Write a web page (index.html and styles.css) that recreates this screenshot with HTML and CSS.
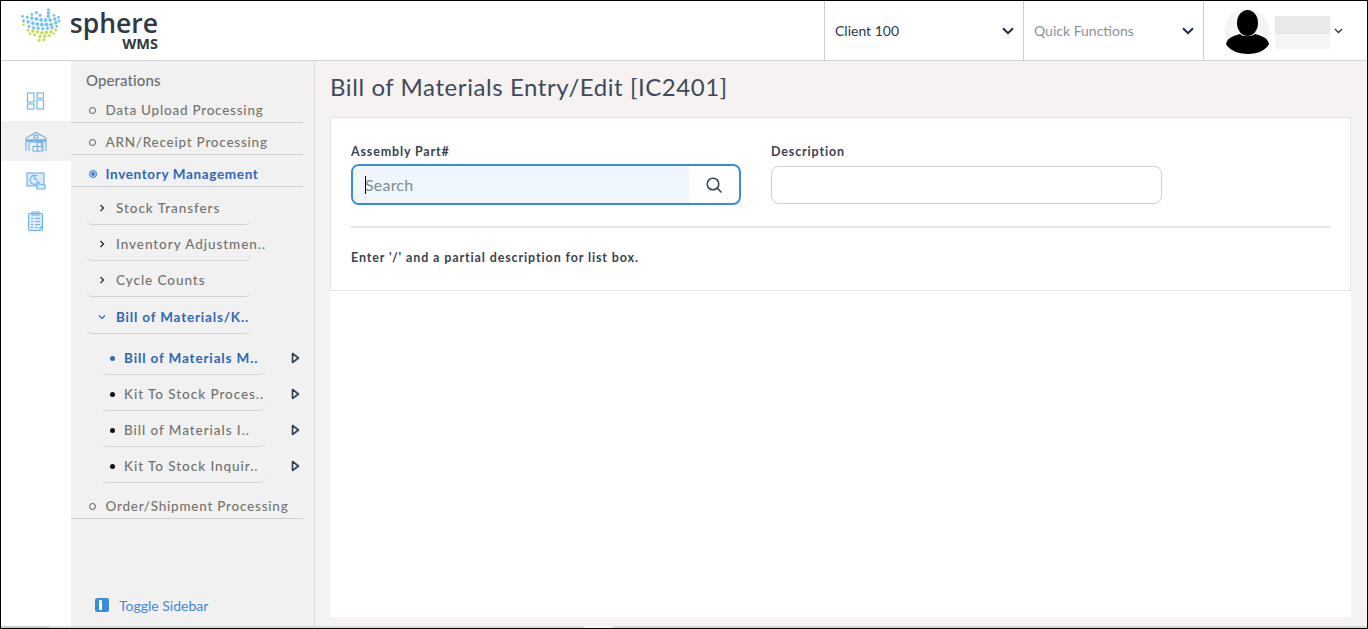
FILE: index.html
```html
<!DOCTYPE html>
<html lang="en">
<head>
<meta charset="utf-8">
<title>Bill of Materials Entry/Edit</title>
<link rel="stylesheet" href="styles.css">
</head>
<body>
<div class="frame">
  <header class="topbar">
    <div class="logo">
      <svg class="logo-mark" width="42" height="35" viewBox="0 0 44 38">
        <g fill="#6ec1e8" stroke="#6ec1e8" stroke-width=".7">
          <circle cx="30" cy="2" r="1.3"/><circle cx="30" cy="5.5" r="1.5"/><circle cx="30" cy="9" r="1.6"/><circle cx="17" cy="5" r="1.3"/><circle cx="21" cy="8" r="1.4"/><circle cx="12" cy="7" r="1.2"/><circle cx="36" cy="8" r="1.2"/>
          <circle cx="2" cy="9" r="1.2"/><circle cx="7" cy="10" r="1.3"/><circle cx="12" cy="11" r="1.5"/><circle cx="17" cy="12" r="1.7"/><circle cx="22" cy="13" r="1.7"/><circle cx="27" cy="13" r="1.7"/><circle cx="32" cy="13" r="1.7"/><circle cx="37" cy="12" r="1.5"/><circle cx="41" cy="10" r="1.2"/>
          <circle cx="3" cy="14" r="1.3"/><circle cx="8" cy="15" r="1.5"/><circle cx="13" cy="16.5" r="1.7"/><circle cx="18" cy="17.5" r="1.8"/><circle cx="23" cy="18" r="1.8"/><circle cx="28" cy="18" r="1.8"/><circle cx="33" cy="18" r="1.7"/><circle cx="38" cy="16" r="1.5"/><circle cx="41.500" cy="14" r="1.2"/>
          <circle cx="9" cy="20" r="1.3"/><circle cx="14" cy="21.500" r="1.4"/><circle cx="19" cy="22" r="1.4"/><circle cx="24" cy="22.500" r="1.4"/><circle cx="29" cy="22" r="1.4"/><circle cx="34" cy="21.500" r="1.4"/><circle cx="39" cy="20" r="1.2"/>
        </g>
        <g fill="#c5d94e" stroke="#c5d94e" stroke-width=".7">
          <circle cx="3" cy="18" r="1"/><circle cx="8" cy="24" r="1.300"/><circle cx="13" cy="25" r="1.500"/><circle cx="18" cy="26" r="1.500"/><circle cx="23" cy="27" r="1.600"/><circle cx="28" cy="26.500" r="1.600"/><circle cx="33" cy="26" r="1.500"/><circle cx="38" cy="24" r="1.300"/>
          <circle cx="10" cy="28" r="1.200"/><circle cx="15" cy="29" r="1.300"/><circle cx="21" cy="31" r="1.500"/><circle cx="26" cy="30.500" r="1.500"/><circle cx="31" cy="30" r="1.300"/><circle cx="36" cy="28" r="1.100"/>
          <circle cx="20" cy="35" r="1.300"/><circle cx="25" cy="34.500" r="1.300"/>
        </g>
      </svg>
      <div class="logo-text">
        <span class="logo-name">sphere</span>
        <span class="logo-sub">WMS</span>
      </div>
    </div>
    <div class="top-cell client">
      <span>Client 100</span>
      <svg class="chev" width="12" height="8" viewBox="0 0 12 8"><path d="M1 1.200l5 5 5-5"/></svg>
    </div>
    <div class="top-cell quick">
      <span>Quick Functions</span>
      <svg class="chev" width="12" height="8" viewBox="0 0 12 8"><path d="M1 1.200l5 5 5-5"/></svg>
    </div>
    <div class="user">
      <svg class="avatar" width="46" height="46" viewBox="0 0 46 46">
        <circle cx="23" cy="23" r="22.500" fill="#f4f4f4"/>
        <ellipse cx="23.500" cy="15" rx="10.500" ry="13" fill="#000"/>
        <path d="M2 36c1-6 7-8 14-10 2 3 12 3 15 0 7 2 13 4 14 10-3 6-11 10-21 10S5 42 2 36z" fill="#000"/>
      </svg>
      <div class="user-name"><div class="name-a"></div><div class="name-b"></div></div>
      <svg class="chev small" width="9" height="6" viewBox="0 0 9 6"><path d="M1 1l3.500 3.500L8 1"/></svg>
    </div>
  </header>

  <div class="body">
    <nav class="rail">
      <div class="rail-item">
        <svg width="20" height="18" viewBox="0 0 20 18"><rect x="1.500" y="1" width="6.500" height="9" /><rect x="11" y="1" width="6.500" height="5"/><rect x="1.500" y="12" width="6.500" height="5"/><rect x="11" y="8" width="6.500" height="9"/></svg>
      </div>
      <div class="rail-item active">
        <svg width="22" height="21" viewBox="0 0 22 21"><path d="M1 20V7l10-5.500L21 7v13"/><path d="M4 20V11h14v9"/><path d="M1 9.500h20" stroke-width="2.500"/><rect x="9" y="4.500" width="4" height="2.500"/><rect x="8" y="15.500" width="4.500" height="4.500"/><rect x="12.500" y="15.500" width="4.500" height="4.500"/><rect x="12" y="11.500" width="4.500" height="4"/></svg>
      </div>
      <div class="rail-item">
        <svg width="20" height="18" viewBox="0 0 20 18"><rect class="soft" x="1" y="1" width="17" height="13"/><path d="M11 4a4.500 4.500 0 1 0 1.500 6"/><path d="M8.500 7V3M8.500 7l3.500 1"/><path class="soft" d="M11 17V10.500c0-1 2-1 2 0v1.500l6 1v4z"/></svg>
      </div>
      <div class="rail-item">
        <svg width="18" height="21" viewBox="0 0 18 21"><rect class="soft" x="1.500" y="2.500" width="14" height="17" rx="1.500"/><rect x="5" y="1" width="7" height="3"/><path d="M4 7.500h2M8 7.500h5M4 10.500h2M8 10.500h5M4 13.500h2M8 13.500h5M4 16.500h2M8 16.500h3M12.500 18l3-3"/></svg>
      </div>
    </nav>

    <aside class="sidebar">
      <div class="side-title">Operations</div>
      <div class="menu-row"><i class="ring"></i>Data Upload Processing</div>
      <div class="menu-row"><i class="ring"></i>ARN/Receipt Processing</div>
      <div class="menu-row current"><i class="ring on"></i>Inventory Management</div>

      <div class="sub-row first"><svg class="caret" width="6" height="8" viewBox="0 0 6 8"><path d="M1.500 1l3 3-3 3"/></svg>Stock Transfers</div>
      <div class="sub-row"><svg class="caret" width="6" height="8" viewBox="0 0 6 8"><path d="M1.500 1l3 3-3 3"/></svg>Inventory Adjustmen..</div>
      <div class="sub-row"><svg class="caret" width="6" height="8" viewBox="0 0 6 8"><path d="M1.500 1l3 3-3 3"/></svg>Cycle Counts</div>
      <div class="sub-row current"><svg class="caret open" width="8" height="6" viewBox="0 0 8 6"><path d="M1 1.500l3 3 3-3"/></svg>Bill of Materials/K..</div>

      <div class="leaf-list">
        <div class="leaf current"><span class="leaf-label"><i class="dot"></i>Bill of Materials M..</span><svg class="play" width="9" height="12" viewBox="0 0 9 12"><path d="M1.500 1.500v9L7.500 6z"/></svg></div>
        <div class="leaf"><span class="leaf-label"><i class="dot"></i>Kit To Stock Proces..</span><svg class="play" width="9" height="12" viewBox="0 0 9 12"><path d="M1.500 1.500v9L7.500 6z"/></svg></div>
        <div class="leaf"><span class="leaf-label"><i class="dot"></i>Bill of Materials I..</span><svg class="play" width="9" height="12" viewBox="0 0 9 12"><path d="M1.500 1.500v9L7.500 6z"/></svg></div>
        <div class="leaf"><span class="leaf-label"><i class="dot"></i>Kit To Stock Inquir..</span><svg class="play" width="9" height="12" viewBox="0 0 9 12"><path d="M1.500 1.500v9L7.500 6z"/></svg></div>
      </div>

      <div class="menu-row"><i class="ring"></i>Order/Shipment Processing</div>

      <div class="toggle"><span class="toggle-icon"><i></i></span>Toggle Sidebar</div>
    </aside>

    <main class="main">
      <h1 class="page-title">Bill of Materials Entry/Edit [IC2401]</h1>
      <div class="sheet">
        <section class="card">
          <div class="fields">
            <div class="field">
              <label class="field-label" for="part">Assembly Part#</label>
              <div class="search">
                <i class="text-caret"></i>
                <input id="part" class="search-input" type="text" placeholder="Search">
                <svg class="search-icon" width="18" height="18" viewBox="0 0 18 18"><circle cx="8" cy="8" r="5.800"/><path d="M12.300 12.300l3.700 3.700"/></svg>
              </div>
            </div>
            <div class="field">
              <label class="field-label" for="desc">Description</label>
              <input id="desc" class="desc-input" type="text">
            </div>
          </div>
          <hr class="rule">
          <p class="hint">Enter '/' and a partial description for list box.</p>
        </section>
      </div>
    </main>
  </div>

  <div class="scrollbar">
    <div class="track-a"></div>
    <div class="track-b"></div>
    <div class="track-gap"></div>
    <div class="track-c"></div>
  </div>
</div>
</body>
</html>
```

FILE: styles.css
```css
* { box-sizing: border-box; }
html, body { margin: 0; padding: 0; height: 100%; overflow: hidden; }
body { font-family: Lato, "Open Sans", sans-serif; color: #333; background: #fff; }

.frame {
  width: 1368px;
  height: 629px;
  border: 1px solid #000;
  display: flex;
  flex-direction: column;
  overflow: hidden;
}

/* top bar */
.topbar {
  height: 60px;
  flex: none;
  display: flex;
  align-items: stretch;
  border-bottom: 1px solid #d3d3d3;
  background: #fff;
}
.logo { width: 823px; display: flex; align-items: flex-start; padding: 7px 0 0 19px; }
.logo-mark { margin-right: 8px; }
.logo-text { display: flex; flex-direction: column; align-items: flex-end; width: 88px; color: #2f3a46; padding-top: 2px; }
.logo-name { font-family: "Open Sans", sans-serif; font-size: 26.500px; line-height: 26px; font-weight: 600; }
.logo-sub { font-family: "Open Sans", sans-serif; font-size: 14.500px; line-height: 15px; font-weight: 700; }

.top-cell {
  display: flex;
  align-items: center;
  justify-content: space-between;
  border-left: 1px solid #cfcfcf;
  font-size: 14px;
  padding: 0 9px 0 10px;
}
.client { width: 199px; color: #2b3a4a; }
.quick { width: 180px; color: #8b8f94; }
.chev { fill: none; stroke: #1e2a44; stroke-width: 2; }
.chev.small { stroke-width: 1.300; stroke: #333; }
.user { flex: 1; border-left: 1px solid #cfcfcf; display: flex; align-items: center; padding: 0 0 0 20px; }
.avatar { margin-right: 5px; flex: none; }
.user-name { width: 55px; margin: 4px 4px 0 0; }
.name-a { height: 18px; background: #e8e9ea; }
.name-b { height: 15px; background: #f6f6f6; }

/* layout */
.body { flex: 1; display: flex; min-height: 0; }

.rail { width: 70px; flex: none; background: #fff; padding-top: 20px; }
.rail-item { height: 40px; display: flex; align-items: center; justify-content: center; }
.rail-item.active { background: #f1f1f1; }
.rail-item svg { fill: none; stroke: #6cb0ec; stroke-width: 1.100; }
.rail-item svg .soft { fill: #dcebfa; }

.sidebar {
  width: 244px;
  flex: none;
  background: #f1f1f1;
  border-right: 1px solid #dedcdc;
  display: flex;
  flex-direction: column;
  font-size: 13.500px;
  letter-spacing: .95px;
  font-weight: 500;
  color: #73726f;
}
.side-title { height: 30px; padding: 10px 0 0 15px; font-size: 15px; line-height: 18px; letter-spacing: .1px; color: #6b6d70; }
.menu-row {
  width: 232px;
  height: 32px;
  display: flex;
  align-items: center;
  padding-left: 18px;
  padding-top: 7px;
  border-bottom: 1px solid #cfcfcf;
  font-size: 13.500px;
  letter-spacing: .76px;
  color: #77756f;
}
.menu-row.current { color: #2f68b4; font-weight: 700; letter-spacing: .65px; }
.ring { width: 7px; height: 7px; border: 1.500px solid #555; border-radius: 50%; margin-right: 9.500px; flex: none; }
.ring.on { width: 8px; height: 8px; margin-right: 8.500px; border: 1.500px solid #3a8bdc; background: #2f7de0; box-shadow: inset 0 0 0 1px #f1f1f1; }

.sub-row {
  width: 164px;
  height: 36px;
  margin-left: 16px;
  padding: 2px 0 0 12px;
  display: flex;
  align-items: center;
  border-bottom: 1px solid #d4d4d4;
  border-radius: 0 0 5px 5px;
  white-space: nowrap;
}
.sub-row.first { height: 38px; padding-top: 4px; }
.sub-row.current { color: #2f68b4; height: 37px; padding-top: 4px; font-weight: 700; letter-spacing: .82px; }
.caret { fill: none; stroke: #222; stroke-width: 1.200; margin-right: 11px; flex: none; }
.caret.open { stroke: #2f68b4; margin-right: 10px; margin-left: -1px; }

.leaf-list { padding: 5px 0 4px 31px; }
.leaf { height: 36px; display: flex; align-items: center; }
.leaf-label {
  width: 163px;
  height: 36px;
  padding: 3px 0 0 8px;
  display: flex;
  align-items: center;
  border-bottom: 1px solid #d4d4d4;
  border-radius: 0 0 5px 5px;
  white-space: nowrap;
}
.leaf.current { color: #2f68b4; font-weight: 700; letter-spacing: .86px; }
.dot { width: 5px; height: 5px; border-radius: 50%; background: #111; margin-right: 9px; flex: none; }
.leaf.current .dot { background: #2f68b4; }
.play { fill: none; stroke: #2d3f56; stroke-width: 1.600; stroke-linejoin: round; margin-left: 26px; margin-top: 2px; flex: none; }

.toggle {
  margin-top: auto;
  height: 30px;
  display: flex;
  align-items: center;
  padding: 0 0 0 24px;
  margin-bottom: 6px;
  font-size: 14px;
  font-weight: 400;
  letter-spacing: 0;
  color: #3f8ad8;
}
.toggle-icon { width: 14px; height: 14px; border-radius: 2px; background: #3b8ddb; display: flex; justify-content: center; margin-right: 10px; padding-top: 2px; }
.toggle-icon i { width: 3px; height: 10px; background: #fff; margin-right: 3px; }

/* main */
.main { flex: 1; min-width: 0; background: #f5f2f1; padding: 0 16px 9px 15px; display: flex; flex-direction: column; }
.page-title { margin: 0; height: 56px; padding-top: 11px; font-size: 24px; line-height: 30px; font-weight: 400; letter-spacing: .58px; color: #3e4a5b; }
.sheet { flex: 1; background: #fff; }
.card { height: 174px; border: 1px solid #e3e3e3; padding: 26px 20px 0; background: #fff; }
.fields { display: flex; gap: 30px; height: 82px; }
.field { display: flex; flex-direction: column; }
.field-label { font-size: 12.500px; line-height: 16px; font-weight: 700; letter-spacing: .85px; color: #3b4350; margin-bottom: 5px; }
.search {
  width: 390px;
  height: 41px;
  border: 2px solid #3b8ddb;
  border-radius: 8px;
  display: flex;
  align-items: center;
  position: relative;
  margin-top: -1px;
  overflow: hidden;
}
.search-input {
  width: 336px;
  height: 100%;
  border: 0;
  outline: 0;
  background: #eff6fd;
  padding: 0 12px;
  font: 400 16px Lato, sans-serif;
  letter-spacing: .2px;
}
.search-input::placeholder { color: #7f8a99; opacity: 1; }
.text-caret { position: absolute; left: 12px; top: 10px; width: 1px; height: 18px; background: #000; }
.search-icon { fill: none; stroke: #2f3e50; stroke-width: 1.500; stroke-linecap: round; margin-left: 16px; }
.desc-input { width: 391px; height: 38px; margin-top: 1px; border: 1px solid #cfcfcf; border-radius: 8px; background: #fff; outline: 0; }
.rule { margin: 0; border: 0; height: 2px; background: #e6e6e6; }
.hint { margin: 22px 0 0; font-size: 12.500px; line-height: 16px; font-weight: 700; letter-spacing: .88px; color: #3b4350; }

/* bottom strip */
.scrollbar { height: 2px; flex: none; display: flex; }
.track-a { width: 49px; background: #cbcbcb; }
.track-b { width: 534px; background: #dcdcdc; }
.track-gap { width: 29px; background: #f5f2f1; }
.track-c { flex: 1; background: #d8d6d5; }
```
